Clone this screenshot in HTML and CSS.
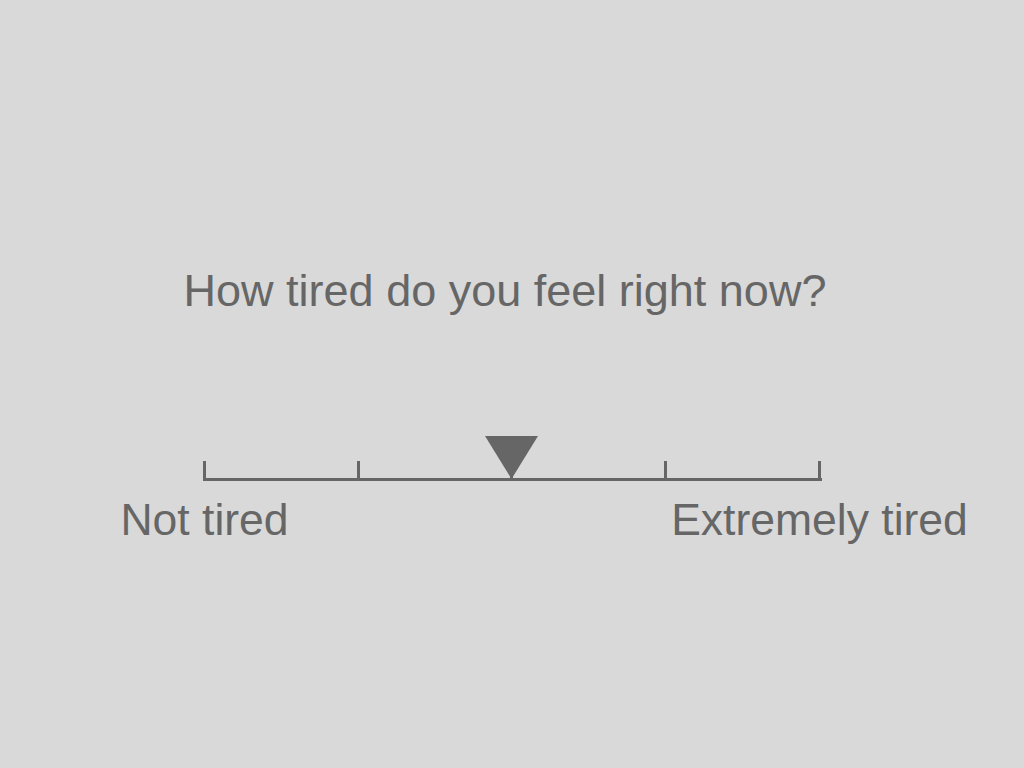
FILE: index.html
```html
<!DOCTYPE html>
<html lang="en">
<head>
  <meta charset="UTF-8" />
  <meta name="viewport" content="width=device-width, initial-scale=1.0" />
  <title>Rating scale</title>
  <link rel="stylesheet" href="styles.css">
</head>
<body>
  <div class="screen">
    <p class="question">How tired do you feel right now?</p>
    <svg class="scale" width="620" height="46" viewBox="0 0 620 46">
      <rect x="1" y="42" width="619" height="3" fill="#666" />
      <rect x="1" y="25" width="3" height="20" fill="#666" />
      <rect x="155" y="25" width="3" height="20" fill="#666" />
      <rect x="308" y="25" width="3" height="20" fill="#666" />
      <rect x="462" y="25" width="3" height="20" fill="#666" />
      <rect x="616" y="25" width="3" height="20" fill="#666" />
      <polygon points="283,0 336,0 309.5,43" fill="#666" />
    </svg>
    <div class="labels">
      <span class="label">Not tired</span>
      <span class="label">Extremely tired</span>
    </div>
  </div>
</body>
</html>
```

FILE: styles.css
```css
body {
  margin: 0;
  background-color: #d9d9d9;
  font-family: "Liberation Sans", Arial, sans-serif;
  color: #666;
}
.screen {
  height: 768px;
  display: flex;
  flex-direction: column;
  align-items: center;
}
.question {
  margin: 268px 14px 0 0;
  font-size: 45px;
  line-height: 45px;
}
.scale {
  display: block;
  margin-top: 123px;
}
.labels {
  width: 615px;
  margin-top: 15px;
  display: flex;
  justify-content: space-between;
}
.label {
  width: 0;
  display: flex;
  justify-content: center;
  white-space: nowrap;
  font-size: 44.5px;
  line-height: 45px;
}
```
